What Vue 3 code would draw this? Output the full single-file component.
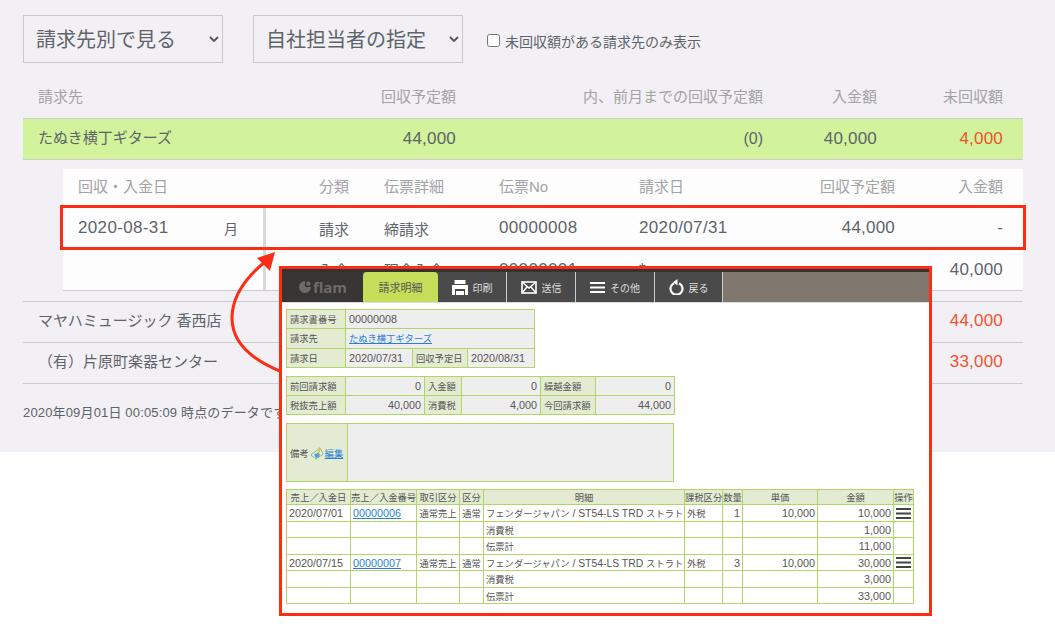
<script setup>
const details = [
  { date: '2020/07/01', no: '00000006', a: '通常売上', b: '通常', tax: '外税', qty: '1', price: '10,000', amount: '10,000', sub: '1,000', total: '11,000' },
  { date: '2020/07/15', no: '00000007', a: '通常売上', b: '通常', tax: '外税', qty: '3', price: '10,000', amount: '30,000', sub: '3,000', total: '33,000' }
]
</script>

<template>
  <div class="root">
    <section class="page">
      <div class="filters">
        <label class="sel sel-a">
          <select><option>請求先別で見る</option></select>
          <svg class="chev" width="10" height="6" viewBox="0 0 10 6"><path d="M1 1l4 4 4-4" fill="none" stroke="#555" stroke-width="1.8"/></svg>
        </label>
        <label class="sel sel-b">
          <select><option>自社担当者の指定</option></select>
          <svg class="chev" width="10" height="6" viewBox="0 0 10 6"><path d="M1 1l4 4 4-4" fill="none" stroke="#555" stroke-width="1.8"/></svg>
        </label>
        <label class="only"><input type="checkbox" />未回収額がある請求先のみ表示</label>
      </div>

      <div class="grid head">
        <span>請求先</span><span class="r">回収予定額</span><span class="r">内、前月までの回収予定額</span><span class="r">入金額</span><span class="r">未回収額</span>
      </div>
      <div class="grid row active">
        <span class="name">たぬき横丁ギターズ</span><span class="r num">44,000</span><span class="r small">(0)</span><span class="r num">40,000</span><span class="r num red">4,000</span>
      </div>

      <div class="sub">
        <div class="sgrid shead">
          <span>回収・入金日</span><span class="r">分類</span><span class="ind">伝票詳細</span><span>伝票No</span><span>請求日</span><span class="r">回収予定額</span><span class="r">入金額</span>
        </div>
        <div class="sgrid srow first">
          <span class="datecell"><span class="num">2020-08-31</span><span class="mon">月</span></span>
          <span class="r ja">請求</span><span class="ja ind">締請求</span><span class="num">00000008</span><span class="num">2020/07/31</span><span class="r num">44,000</span><span class="r num">-</span>
        </div>
        <div class="sgrid srow">
          <span class="datecell"></span>
          <span class="r ja">入金</span><span class="ja ind">現金入金</span><span class="num">00000001</span><span class="num">*</span><span class="r num">-</span><span class="r num">40,000</span>
        </div>
      </div>

      <div class="grid row plain top">
        <span class="name">マヤハミュージック 香西店</span><span></span><span></span><span></span><span class="r num red">44,000</span>
      </div>
      <div class="grid row plain">
        <span class="name">（有）片原町楽器センター</span><span></span><span></span><span></span><span class="r num red">33,000</span>
      </div>
      <p class="stamp">2020年09月01日 00:05:09 時点のデータです。</p>
    </section>

    <div class="highlight"></div>
    <svg class="arrow" width="1055" height="638" viewBox="0 0 1055 638">
      <path d="M282 372C252 360 232 342 232 318C232 294 250 274 266 261" fill="none" stroke="#fb2d14" stroke-width="3"/>
      <polygon points="275,252 257,258 270,271" fill="#fb2d14"/>
    </svg>

    <div class="shot">
      <div class="bar">
        <div class="logo">
          <svg width="14" height="14" viewBox="0 0 14 14"><path d="M7 1a6 6 0 1 0 6 6H7z" fill="#6f6a64"/><circle cx="10.400" cy="3.600" r="2.200" fill="#6f6a64"/></svg>
          <span>flam</span>
        </div>
        <div class="tab on">請求明細</div>
        <div class="tab t1">
          <svg width="16" height="15" viewBox="0 0 16 15"><path d="M2.500 0h11v4h-11zM0 5h16v10H0z" fill="#fff"/><path d="M3 9h10v6H3z" fill="#4a4a4a"/><path d="M4 11h8v4H4z" fill="#fff"/></svg>
          <span>印刷</span>
        </div>
        <div class="tab t2">
          <svg width="16" height="13" viewBox="0 0 16 13"><rect x="1" y="1" width="14" height="11" fill="none" stroke="#fff" stroke-width="1.600"/><path d="M1 1l7 6 7-6M1 12l5-6M15 12l-5-6" fill="none" stroke="#fff" stroke-width="1.400"/></svg>
          <span>送信</span>
        </div>
        <div class="tab t3">
          <svg width="15" height="11" viewBox="0 0 15 11"><path d="M0 0h15v2H0zM0 4.500h15v2H0zM0 9h15v2H0z" fill="#fff"/></svg>
          <span>その他</span>
        </div>
        <div class="tab t4">
          <svg width="15" height="16" viewBox="0 0 15 16"><path d="M5 4.200a6 6 0 1 0 5 0" fill="none" stroke="#fff" stroke-width="2.200"/><path d="M8.500 0v6.500L4 3.200z" fill="#fff"/></svg>
          <span>戻る</span>
        </div>
        <div class="rest"></div>
      </div>

      <div class="doc">
        <table class="t t-a">
          <colgroup><col style="width:59px"/><col style="width:67px"/><col style="width:55px"/><col style="width:67px"/></colgroup>
          <tbody>
            <tr><th>請求書番号</th><td colspan="3" class="n">00000008</td></tr>
            <tr><th>請求先</th><td colspan="3"><a class="lk">たぬき横丁ギターズ</a></td></tr>
            <tr><th>請求日</th><td class="n">2020/07/31</td><th>回収予定日</th><td class="n">2020/08/31</td></tr>
          </tbody>
        </table>

        <table class="t t-b">
          <colgroup><col style="width:59px"/><col style="width:79px"/><col style="width:37px"/><col style="width:79px"/><col style="width:55px"/><col style="width:79px"/></colgroup>
          <tbody>
            <tr><th>前回請求額</th><td class="n rt">0</td><th>入金額</th><td class="n rt">0</td><th>繰越金額</th><td class="n rt">0</td></tr>
            <tr><th>税抜売上額</th><td class="n rt">40,000</td><th>消費税</th><td class="n rt">4,000</td><th>今回請求額</th><td class="n rt">44,000</td></tr>
          </tbody>
        </table>

        <table class="t t-c">
          <colgroup><col style="width:61px"/><col style="width:326px"/></colgroup>
          <tbody>
            <tr>
              <th>
                <span class="memo">備考
                  <svg width="14" height="14" viewBox="0 0 14 14"><path d="M1 9l5 4 7-5-3-6z" fill="#e8f2f4" stroke="#5db56d" stroke-width=".8"/><path d="M7 9l2-8 2 1-2 7z" fill="#f0c040"/><path d="M4 9c1-2 4-2 6-1l-1 3-3 1z" fill="#5a9bd8"/></svg>
                  <a class="lk">編集</a>
                </span>
              </th>
              <td></td>
            </tr>
          </tbody>
        </table>

        <table class="t t-d">
          <colgroup>
            <col style="width:64px"/><col style="width:66px"/><col style="width:43px"/><col style="width:24px"/><col style="width:201px"/><col style="width:38px"/><col style="width:20px"/><col style="width:75px"/><col style="width:76px"/><col style="width:20px"/>
          </colgroup>
          <thead>
            <tr><th>売上／入金日</th><th>売上／入金番号</th><th>取引区分</th><th>区分</th><th>明細</th><th>課税区分</th><th>数量</th><th>単価</th><th>金額</th><th>操作</th></tr>
          </thead>
          <tbody>
            <template v-for="d in details" :key="d.no">
              <tr>
                <td class="n">{{ d.date }}</td><td class="n"><a class="lk">{{ d.no }}</a></td><td class="c">{{ d.a }}</td><td class="c">{{ d.b }}</td>
                <td>フェンダージャパン<span class="lat"> / ST54-LS TRD </span>ストラト</td>
                <td>{{ d.tax }}</td><td class="n rt">{{ d.qty }}</td><td class="n rt">{{ d.price }}</td><td class="n rt">{{ d.amount }}</td>
                <td class="op"><svg width="15" height="11" viewBox="0 0 15 11"><path d="M0 0h15v2H0zM0 4.500h15v2H0zM0 9h15v2H0z" fill="#444"/></svg></td>
              </tr>
              <tr><td></td><td></td><td></td><td></td><td>消費税</td><td></td><td></td><td></td><td class="n rt">{{ d.sub }}</td><td></td></tr>
              <tr><td></td><td></td><td></td><td></td><td>伝票計</td><td></td><td></td><td></td><td class="n rt">{{ d.total }}</td><td></td></tr>
            </template>
          </tbody>
        </table>
      </div>
    </div>
  </div>
</template>

<style>
html, body { margin: 0; background: #fff; }
</style>

<style scoped>
.root {
  position: relative;
  width: 1055px;
  height: 638px;
  overflow: hidden;
  background: #fff;
  font-family: "Liberation Sans", "Noto Sans CJK JP", sans-serif;
  color: #5d646b;
}
.page {
  height: 437px;
  padding: 15px 32px 0 23px;
  background: #f2f0f4;
}
.filters { display: flex; align-items: center; height: 48px; }
.sel { position: relative; display: block; height: 48px; box-sizing: border-box; }
.sel-a { width: 200px; margin-right: 30px; }
.sel-b { width: 210px; margin-right: 24px; }
.sel select {
  appearance: none;
  width: 100%;
  height: 100%;
  box-sizing: border-box;
  border: 1px solid #c9c9cc;
  border-radius: 0;
  background: transparent;
  padding: 2px 0 0 12px;
  font: 20px "Liberation Sans", "Noto Sans CJK JP", sans-serif;
  color: #5d646b;
}
.chev { position: absolute; right: 4px; top: 21px; }
.only { display: flex; align-items: center; font-size: 14px; margin-top: 3px; }
.only input { width: 13px; height: 13px; margin: 0 5px 0 0; }

.grid {
  display: grid;
  grid-template-columns: 200px 218px 307px 114px 126px;
  width: 1000px;
  box-sizing: border-box;
  padding: 0 20px 0 15px;
  align-items: center;
  font-size: 15px;
  white-space: nowrap;
}
.r { text-align: right; }
.head { height: 55px; color: #a3a3a6; padding-top: 10px; }
.row { height: 41px; border-bottom: 1px solid #ccc; padding-bottom: 2px; }
.active { background: #d2f29b; border-top: 1px solid #ccc; height: 42px; padding-bottom: 1px; }
.name { margin-top: -3px; }
.active .name { margin-top: -4px; }
.top { border-top: 1px solid #ccc; height: 42px; }
.num { font-size: 17px; letter-spacing: 0.350px; }
.r.num { letter-spacing: 0.200px; }
.small { font-size: 16px; }
.red { color: #f0532d; }
.sub { margin: 9px 0 10px 40px; width: 960px; background: #fdfdfd; border-bottom: 1px solid #ccc; }
.sgrid {
  display: grid;
  grid-template-columns: 201px 70px 150px 140px 148px 108px 108px;
  padding: 0 20px 0 15px;
  align-items: center;
  font-size: 15px;
  white-space: nowrap;
}
.ind { padding-left: 35px; }
.shead { height: 37px; color: #a3a3a6; padding-bottom: 4px; box-sizing: border-box; }
.srow { height: 41px; }
.first { border-top: 1px solid #ccc; height: 42px; }
.datecell { position: relative; display: flex; align-items: center; height: 100%; }
.datecell .num { width: 146px; }
.mon { font-size: 14px; }
.srow .datecell::after {
  content: "";
  position: absolute;
  left: 185px;
  top: 0;
  bottom: 0;
  width: 3px;
  background: #d9d9d9;
}
.stamp { margin: 18px 0 0; font-size: 13px; letter-spacing: 0.160px; }

.highlight {
  position: absolute;
  left: 60px;
  top: 205px;
  width: 966px;
  height: 45px;
  box-sizing: border-box;
  border: 3px solid #fb2d14;
}
.arrow { position: absolute; left: 0; top: 0; }

.shot {
  position: absolute;
  left: 279px;
  top: 266px;
  width: 653px;
  height: 350px;
  box-sizing: border-box;
  border: 3px solid #fb2d14;
  background: #fff;
  overflow: hidden;
}
.bar {
  display: flex;
  height: 34px;
  border-top: 3px solid #333;
  box-sizing: border-box;
  background: #4a4a4a;
  border-bottom: 1px solid #ddd;
}
.logo {
  width: 81px;
  display: flex;
  align-items: center;
  justify-content: center;
  gap: 1px;
  background: #383634;
  color: #6f6a64;
  font: bold 15px "Open Sans", sans-serif;
}
.tab {
  display: flex;
  align-items: center;
  justify-content: center;
  gap: 5px;
  font-size: 10px;
  color: #ddd;
  border-right: 1px solid #ccc;
}
.on {
  width: 75px;
  background: #c5de5a;
  color: #555;
  font-size: 11px;
  border-radius: 4px 4px 0 0;
  border-right: 0;
}
.t1 { width: 68px; }
.t2 { width: 68px; }
.t3 { width: 78px; }
.t4 { width: 67px; }
.rest { flex: 1; background: #80786e; }

.doc { padding: 6px 0 0 4px; }
.t {
  table-layout: fixed;
  border-collapse: collapse;
  border: 1px solid #b2d568;
  font-size: 9.300px;
  color: #555;
}
.t th, .t td {
  border: 1px solid #b2d568;
  padding: 0 3px;
  height: 18px;
  box-sizing: border-box;
  white-space: nowrap;
  overflow: hidden;
  font-weight: normal;
}
.t th { background: #e3ecd3; text-align: left; }
.t td { background: #eee; }
.n { font-size: 10.800px; }
.rt { text-align: right; }
.c { text-align: center; }
.lk { color: #2a7fd4; text-decoration: underline; }
.t-a { width: 249px; }
.t-a th, .t-a td { height: 19.300px; }
.t-b { width: 388px; margin-top: 8px; }
.t-b th, .t-b td { height: 19.300px; }
.t-c { width: 388px; margin-top: 8px; }
.t-c th, .t-c td { height: 58px; padding: 0 0 0 3px; }
.memo { display: flex; align-items: center; gap: 1px; }
.t-d { width: 627px; margin-top: 7px; }
.t-d thead th { text-align: center; height: 15px; padding: 0; }
.t-d td { background: #fff; height: 16.500px; padding: 0 2px; }
.lat { font-size: 10.400px; }
.op { text-align: center; padding: 0 !important; line-height: 0; }
</style>
